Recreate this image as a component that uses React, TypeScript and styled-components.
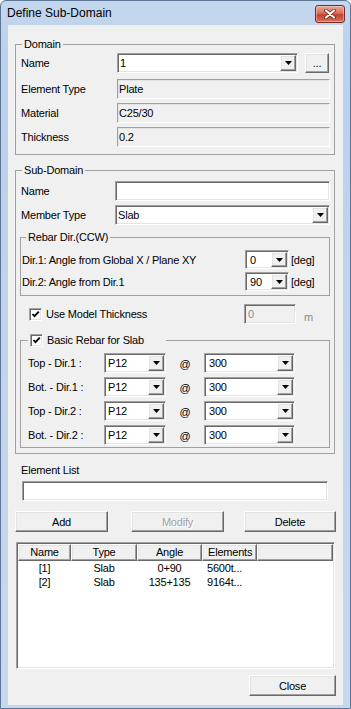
import * as React from 'react';
import styled, { createGlobalStyle, css } from 'styled-components';

// *** global ***
const GlobalStyle = createGlobalStyle`
    html, body {
        margin: 0;
        padding: 0;
        background: #ffffff;
    }
    body {
        font-family: "Liberation Sans", Arial, sans-serif;
        font-size: 11px;
        letter-spacing: -0.2px;
        color: #000000;
    }
    * {
        box-sizing: border-box;
    }
`

// *** classic 3D borders ***
const sunken = css`
    border-style: solid;
    border-width: 1px;
    border-color: #a0a0a0 #ffffff #ffffff #a0a0a0;
    box-shadow: inset 1px 1px 0 #696969, inset -1px -1px 0 #e3e3e3;
    padding: 1px;
`
const raised = css`
    border-style: solid;
    border-width: 1px;
    border-color: #ffffff #696969 #696969 #ffffff;
    box-shadow: inset -1px -1px 0 #a0a0a0, inset 1px 1px 0 #e3e3e3;
    background: #f0f0f0;
`

// *** window frame ***
const Window = styled.div`
    width: 351px;
    height: 709px;
    display: flex;
    flex-direction: column;
    background: linear-gradient(#c3d7ee, #bcd1ea 60px, #c6d8ed);
    border: 1px solid #5d7696;
    border-radius: 6px 6px 0 0;
`
const TitleBar = styled.div`
    height: 24px;
    flex: none;
    display: flex;
    align-items: center;
    justify-content: space-between;
    padding: 0 5px 0 6px;
`
const Title = styled.span`
    font-size: 12px;
    letter-spacing: 0;
    color: #000000;
`
const CloseButton = styled.div`
    width: 30px;
    height: 18px;
    margin-top: 2px;
    display: flex;
    align-items: center;
    justify-content: center;
    border: 1px solid #7a2a1e;
    border-radius: 3px;
    background: linear-gradient(#e9a899, #d9705c 45%, #c5412b 55%, #d6735d);
    box-shadow: inset 0 0 0 1px rgba(255,255,255,0.35);
`
const Body = styled.div`
    flex: 1;
    margin: 0 7px 3px 7px;
    padding: 0 7px 0 7px;
    background: #f0f0f0;
    display: flex;
    flex-direction: column;
`

// *** group boxes ***
const Group = styled.fieldset<{ $mt: number; $pad: string; $mr?: number }>`
    margin: ${p => p.$mt}px ${p => p.$mr ?? 0}px 0 0;
    padding: ${p => p.$pad};
    border: 1px solid #a0a0a0;
    min-width: 0;
`
const Legend = styled.legend<{ $ml: number; $w?: number }>`
    margin-left: ${p => p.$ml}px;
    padding: 0 2px;
    line-height: 13px;
    height: 13px;
    width: ${p => p.$w ? `${p.$w}px` : 'auto'};
    display: flex;
    align-items: center;
`

// *** rows & labels ***
const Row = styled.div<{ $mt?: number; $h?: number }>`
    display: flex;
    align-items: center;
    height: ${p => p.$h ?? 20}px;
    margin-top: ${p => p.$mt ?? 0}px;
`
const Label = styled.span<{ $w?: number; $pl?: number }>`
    width: ${p => p.$w ? `${p.$w}px` : 'auto'};
    flex: ${p => p.$w ? 'none' : '1'};
    padding-left: ${p => p.$pl ?? 0}px;
    white-space: nowrap;
`
const Unit = styled.span<{ $w: number; $pl?: number; $disabled?: boolean }>`
    width: ${p => p.$w}px;
    flex: none;
    padding-left: ${p => p.$pl ?? 0}px;
    color: ${p => p.$disabled ? '#8a8a8a' : '#000000'};
`
const LowUnit = styled(Unit)`
    align-self: flex-end;
    padding-bottom: 1px;
`
const At = styled.span`
    width: 38px;
    flex: none;
    text-align: center;
    padding-top: 2px;
`

// *** fields ***
const Combo = styled.div<{ $w?: number; $h?: number }>`
    ${sunken};
    width: ${p => p.$w ? `${p.$w}px` : 'auto'};
    flex: ${p => p.$w ? 'none' : '1'};
    height: ${p => p.$h ?? 20}px;
    background: #ffffff;
    display: flex;
`
const ComboText = styled.span<{ $pl?: number }>`
    flex: 1;
    padding-left: ${p => p.$pl ?? 1}px;
    line-height: 16px;
    white-space: nowrap;
    overflow: hidden;
`
const ArrowBox = styled.span`
    ${raised};
    width: 16px;
    flex: none;
    display: flex;
    align-items: center;
    justify-content: center;
`
const TextBox = styled.div<{ $w?: number; $ml?: number; $disabled?: boolean }>`
    ${sunken};
    width: ${p => p.$w ? `${p.$w}px` : 'auto'};
    flex: ${p => p.$w ? 'none' : '1'};
    height: 20px;
    margin-left: ${p => p.$ml ?? 0}px;
    background: ${p => p.$disabled ? '#f0f0f0' : '#ffffff'};
    color: ${p => p.$disabled ? '#8a8a8a' : '#000000'};
    line-height: 16px;
    padding-left: 3px;
`
const ReadOnly = styled.div`
    flex: 1;
    height: 20px;
    border-style: solid;
    border-width: 1px;
    border-color: #a0a0a0 #ffffff #ffffff #a0a0a0;
    box-shadow: inset 1px 1px 0 #e3e3e3;
    background: #f0f0f0;
    line-height: 18px;
    padding-left: 1px;
`
const Check = styled.span`
    ${sunken};
    padding: 0;
    width: 13px;
    height: 13px;
    flex: none;
    background: #ffffff;
    display: flex;
    align-items: center;
    justify-content: center;
`
const CheckLabel = styled.span`
    margin-left: 4px;
    white-space: nowrap;
`

// *** buttons ***
const Button = styled.div<{ $w: number; $ml?: number; $disabled?: boolean; $h?: number }>`
    ${raised};
    width: ${p => p.$w}px;
    height: ${p => p.$h ?? 21}px;
    flex: none;
    margin-left: ${p => p.$ml ?? 0}px;
    display: flex;
    align-items: center;
    justify-content: center;
    color: ${p => p.$disabled ? '#a0a0a0' : '#000000'};
    text-shadow: ${p => p.$disabled ? '1px 1px 0 #ffffff' : 'none'};
`
const ButtonRow = styled.div<{ $mt: number; $end?: boolean }>`
    display: flex;
    justify-content: ${p => p.$end ? 'flex-end' : 'flex-start'};
    margin-top: ${p => p.$mt}px;
`
const Spacer = styled.span`
    flex: 1;
`

// *** list view ***
const ListView = styled.div`
    ${sunken};
    margin: 10px 1px 0 1px;
    height: 127px;
    background: #ffffff;
    display: flex;
    flex-direction: column;
`
const ColumnGrid = styled.div`
    display: grid;
    grid-template-columns: 53px 66px 65px 55px 1fr;
`
const HeaderCell = styled.div<{ $left?: boolean }>`
    ${raised};
    height: 17px;
    line-height: 15px;
    text-align: ${p => p.$left ? 'left' : 'center'};
    padding-left: ${p => p.$left ? '5px' : '0'};
`
const Cell = styled.div<{ $left?: boolean }>`
    height: 14px;
    line-height: 14px;
    text-align: ${p => p.$left ? 'left' : 'center'};
    padding-left: ${p => p.$left ? '5px' : '0'};
    white-space: nowrap;
`
const SectionLabel = styled.div<{ $mt: number }>`
    margin-top: ${p => p.$mt}px;
    padding-left: 6px;
    line-height: 13px;
`

// *** icons ***
const DropArrow: React.FC = () => (
    <svg width="7" height="4" viewBox="0 0 7 4">
        <polygon points="0,0 7,0 3.5,4" fill="#000000" />
    </svg>
)
const CheckMark: React.FC = () => (
    <svg width="9" height="9" viewBox="0 0 9 9">
        <polyline points="1.5,4 3.5,6.2 7.8,1.6" fill="none" stroke="#000000" strokeWidth="1.8" />
    </svg>
)

interface ComboProps {
    value: string,
    w?: number,
    pl?: number,
    h?: number
}
const ComboBox: React.FC<ComboProps> = ({ value, w, pl, h }) => (
    <Combo $w={w} $h={h}>
        <ComboText $pl={pl}>{value}</ComboText>
        <ArrowBox><DropArrow /></ArrowBox>
    </Combo>
)

const rebarRows = ['Top - Dir.1 :', 'Bot. - Dir.1 :', 'Top - Dir.2 :', 'Bot. - Dir.2 :'];

const subDomains = [
    { name: '[1]', type: 'Slab', angle: '0+90', elements: '5600t...' },
    { name: '[2]', type: 'Slab', angle: '135+135', elements: '9164t...' },
];

export default function App() {
    return (
        <>
            <GlobalStyle />
            <Window>
                <TitleBar>
                    <Title>Define Sub-Domain</Title>
                    <CloseButton>
                        <svg width="12" height="10" viewBox="0 0 12 10">
                            <path d="M2 1.5 L10 8.5 M10 1.5 L2 8.5" stroke="#5a1a10" strokeWidth="3.6" strokeLinecap="round" />
                            <path d="M2 1.5 L10 8.5 M10 1.5 L2 8.5" stroke="#ffffff" strokeWidth="2.2" strokeLinecap="round" />
                        </svg>
                    </CloseButton>
                </TitleBar>
                <Body>
                    {/* *** Domain *** */}
                    <Group $mt={13} $mr={1} $pad="2px 4px 7px 5px">
                        <Legend $ml={1}>Domain</Legend>
                        <Row>
                            <Label $w={96}>Name</Label>
                            <ComboBox value="1" w={181} />
                            <Button $w={24} $h={20} $ml={7}>...</Button>
                        </Row>
                        <Row $mt={6}>
                            <Label $w={96}>Element Type</Label>
                            <ReadOnly>Plate</ReadOnly>
                        </Row>
                        <Row $mt={4}>
                            <Label $w={96}>Material</Label>
                            <ReadOnly>C25/30</ReadOnly>
                        </Row>
                        <Row $mt={4}>
                            <Label $w={96}>Thickness</Label>
                            <ReadOnly>0.2</ReadOnly>
                        </Row>
                    </Group>

                    {/* *** Sub-Domain *** */}
                    <Group $mt={9} $mr={1} $pad="4px 4px 5px 4px">
                        <Legend $ml={2}>Sub-Domain</Legend>
                        <Row>
                            <Label $w={95} $pl={1}>Name</Label>
                            <TextBox />
                        </Row>
                        <Row $mt={4}>
                            <Label $w={95} $pl={1}>Member Type</Label>
                            <ComboBox value="Slab" />
                        </Row>

                        <Group $mt={6} $pad="6px 12px 4px 1px">
                            <Legend $ml={4}>Rebar Dir.(CCW)</Legend>
                            <Row $h={19}>
                                <Label>Dir.1: Angle from Global X / Plane XY</Label>
                                <ComboBox value="0" w={44} h={19} pl={3} />
                                <Unit $w={28} $pl={2}>[deg]</Unit>
                            </Row>
                            <Row $h={19} $mt={3}>
                                <Label>Dir.2: Angle from Dir.1</Label>
                                <ComboBox value="90" w={44} h={19} pl={3} />
                                <Unit $w={28} $pl={2}>[deg]</Unit>
                            </Row>
                        </Group>

                        <Row $mt={8}>
                            <Check style={{ marginLeft: 9 }}><CheckMark /></Check>
                            <CheckLabel>Use Model Thickness</CheckLabel>
                            <Spacer />
                            <TextBox $w={52} $disabled>0</TextBox>
                            <LowUnit $w={34} $pl={8} $disabled>m</LowUnit>
                        </Row>

                        <Group $mt={10} $pad="6px 33px 2px 7px">
                            <Legend $ml={0} $w={138}>
                                <Check><CheckMark /></Check>
                                <CheckLabel>Basic Rebar for Slab</CheckLabel>
                            </Legend>
                            {rebarRows.map((label, index) => (
                                <Row key={index} $mt={index === 0 ? 0 : 4}>
                                    <Label $w={76}>{label}</Label>
                                    <ComboBox value="P12" w={62} pl={2} />
                                    <At>@</At>
                                    <ComboBox value="300" w={91} pl={3} />
                                </Row>
                            ))}
                        </Group>
                    </Group>

                    {/* *** Element list *** */}
                    <SectionLabel $mt={10}>Element List</SectionLabel>
                    <Row $mt={4}>
                        <TextBox $w={306} $ml={7} />
                    </Row>

                    <ButtonRow $mt={10}>
                        <Button $w={93}>Add</Button>
                        <Button $w={93} $ml={23} $disabled>Modify</Button>
                        <Spacer />
                        <Button $w={92}>Delete</Button>
                    </ButtonRow>

                    <ListView>
                        <ColumnGrid>
                            <HeaderCell>Name</HeaderCell>
                            <HeaderCell>Type</HeaderCell>
                            <HeaderCell>Angle</HeaderCell>
                            <HeaderCell $left>Elements</HeaderCell>
                            <HeaderCell />
                        </ColumnGrid>
                        {subDomains.map((item, index) => (
                            <ColumnGrid key={index}>
                                <Cell>{item.name}</Cell>
                                <Cell>{item.type}</Cell>
                                <Cell>{item.angle}</Cell>
                                <Cell $left>{item.elements}</Cell>
                                <Cell />
                            </ColumnGrid>
                        ))}
                    </ListView>

                    <ButtonRow $mt={6} $end>
                        <Button $w={87}>Close</Button>
                    </ButtonRow>
                </Body>
            </Window>
        </>
    )
}
